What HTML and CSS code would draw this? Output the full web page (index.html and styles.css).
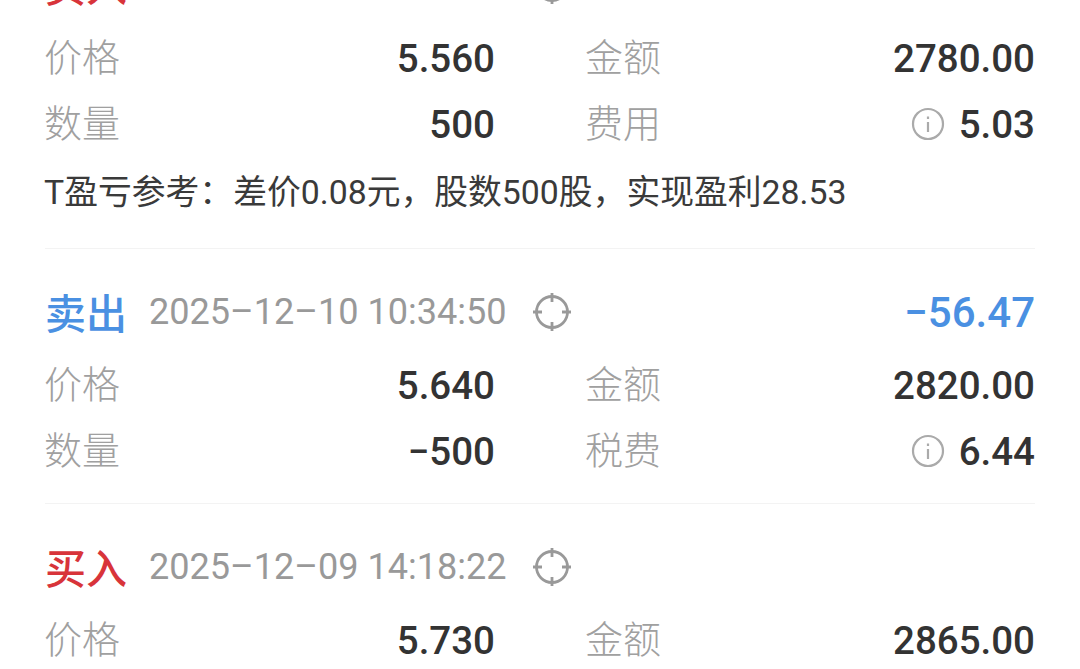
FILE: index.html
```html
<!DOCTYPE html>
<html lang="zh-CN">
<head>
<meta charset="utf-8">
<title>交易记录</title>
<link rel="stylesheet" href="styles.css">
</head>
<body>
<main class="list">
  <section class="record">
    <header class="head">
      <span class="side buy">买入</span>
      <span class="time">2025–12–10 10:26:14</span>
      <svg class="target" viewBox="0 0 40 40"><circle cx="20" cy="20" r="15.5"/><path d="M20 1v9M20 30v9M1 20h9M30 20h9"/></svg>
    </header>
    <div class="grid">
      <div class="row"><span class="label">价格</span><span class="value">5.560</span></div>
      <div class="row"><span class="label">金额</span><span class="value">2780.00</span></div>
      <div class="row"><span class="label">数量</span><span class="value">500</span></div>
      <div class="row"><span class="label">费用</span><span class="value with-info"><svg class="info" viewBox="0 0 34 34"><circle cx="17" cy="17" r="15"/><path d="M17 15v10M17 9.500v2.500"/></svg>5.03</span></div>
    </div>
    <p class="note">T盈亏参考：差价0.08元，股数500股，实现盈利28.53</p>
  </section>
  <section class="record">
    <header class="head">
      <span class="side sell">卖出</span>
      <span class="time">2025–12–10 10:34:50</span>
      <svg class="target" viewBox="0 0 40 40"><circle cx="20" cy="20" r="15.5"/><path d="M20 1v9M20 30v9M1 20h9M30 20h9"/></svg>
      <span class="profit">−56.47</span>
    </header>
    <div class="grid">
      <div class="row"><span class="label">价格</span><span class="value">5.640</span></div>
      <div class="row"><span class="label">金额</span><span class="value">2820.00</span></div>
      <div class="row"><span class="label">数量</span><span class="value">−500</span></div>
      <div class="row"><span class="label">税费</span><span class="value with-info"><svg class="info" viewBox="0 0 34 34"><circle cx="17" cy="17" r="15"/><path d="M17 15v10M17 9.500v2.500"/></svg>6.44</span></div>
    </div>
  </section>
  <section class="record">
    <header class="head">
      <span class="side buy">买入</span>
      <span class="time">2025–12–09 14:18:22</span>
      <svg class="target" viewBox="0 0 40 40"><circle cx="20" cy="20" r="15.5"/><path d="M20 1v9M20 30v9M1 20h9M30 20h9"/></svg>
    </header>
    <div class="grid">
      <div class="row"><span class="label">价格</span><span class="value">5.730</span></div>
      <div class="row"><span class="label">金额</span><span class="value">2865.00</span></div>
    </div>
  </section>
</main>
</body>
</html>
```
FILE: styles.css
```css
html, body {
  margin: 0;
  height: 669px;
  overflow: hidden;
  background: #fff;
}
body {
  font-family: Roboto, "Noto Sans CJK SC", sans-serif;
}
.list {
  margin: -78px 45px 0;
}
.record {
  padding: 23px 0 19px;
  border-bottom: 1px solid #f3f3f3;
}
.record:last-child {
  border-bottom: 0;
}
.head {
  height: 80px;
  display: flex;
  align-items: center;
}
.side {
  padding-bottom: 2px;
  font-family: "Noto Sans CJK SC", sans-serif;
  font-size: 41px;
  font-weight: 500;
  line-height: 1;
}
.buy { color: #d8343a; }
.sell { color: #4a90e2; }
.time {
  margin-left: 22px;
  font-size: 36.100px;
  color: #999;
}
.target {
  width: 40px;
  height: 40px;
  margin-left: 25px;
  fill: none;
  stroke: #999;
  stroke-width: 2.800;
}
.profit {
  margin-left: auto;
  font-size: 42px;
  font-weight: 500;
  color: #4a90e2;
}
.grid {
  display: grid;
  grid-template-columns: 450px 449px;
  column-gap: 91px;
  grid-auto-rows: 66px;
}
.row {
  display: flex;
  align-items: center;
  justify-content: space-between;
}
.label {
  margin-left: -1px;
  padding-bottom: 7px;
  font-family: "Noto Sans CJK SC", sans-serif;
  font-size: 38px;
  font-weight: 300;
  color: #a0a0a0;
}
.value {
  font-size: 38.500px;
  font-weight: 500;
  color: #333;
}
.with-info {
  display: flex;
  align-items: center;
  gap: 14px;
}
.info {
  width: 34px;
  height: 34px;
  fill: none;
  stroke: #aaa;
  stroke-width: 2.200;
}
.note {
  margin: 12px 0 14px -1px;
  height: 46px;
  font-size: 33.800px;
  line-height: 48px;
  color: #3a3a3a;
  white-space: nowrap;
}
```
